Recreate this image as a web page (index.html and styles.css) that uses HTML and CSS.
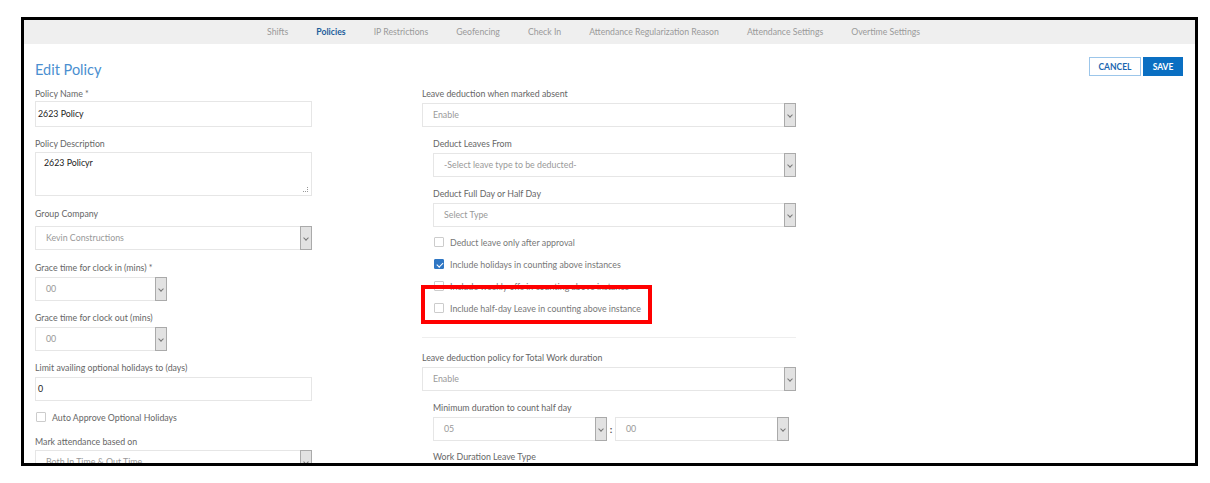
FILE: index.html
```html
<!DOCTYPE html>
<html lang="en">
<head>
    <meta charset="UTF-8">
    <meta name="viewport" content="width=device-width, initial-scale=1.0">
    <title>Edit Policy</title>
    <link rel="stylesheet" href="styles.css">
</head>
<body>
    <div class="frame">
        <nav class="tabs">
            <a href="#">Shifts</a>
            <a href="#" class="active">Policies</a>
            <a href="#">IP Restrictions</a>
            <a href="#">Geofencing</a>
            <a href="#">Check In</a>
            <a href="#">Attendance Regularization Reason</a>
            <a href="#">Attendance Settings</a>
            <a href="#">Overtime Settings</a>
        </nav>

        <div class="content">
            <div class="header">
                <h1>Edit Policy</h1>
                <div class="actions">
                    <button class="btnCancel">CANCEL</button>
                    <button class="btnSave">SAVE</button>
                </div>
            </div>

            <div class="columns">
                <div class="colLeft">
                    <div class="field">
                        <label>Policy Name *</label>
                        <div class="input inputTall">2623 Policy</div>
                    </div>
                    <div class="field wide">
                        <label>Policy Description</label>
                        <div class="textarea">2623 Policyr<span class="grip"></span></div>
                    </div>
                    <div class="field wide">
                        <label>Group Company</label>
                        <div class="select selectLow"><span>Kevin Constructions</span><i class="arrow"></i></div>
                    </div>
                    <div class="field">
                        <label>Grace time for clock in (mins) *</label>
                        <div class="select small"><span>00</span><i class="arrow"></i></div>
                    </div>
                    <div class="field">
                        <label>Grace time for clock out (mins)</label>
                        <div class="select small"><span>00</span><i class="arrow"></i></div>
                    </div>
                    <div class="field">
                        <label>Limit availing optional holidays to (days)</label>
                        <div class="input">0</div>
                    </div>
                    <div class="check checkLeft"><i class="box"></i>Auto Approve Optional Holidays</div>
                    <div class="field">
                        <label>Mark attendance based on</label>
                        <div class="select selectHigh"><span>Both In Time &amp; Out Time</span><i class="arrow"></i></div>
                    </div>
                </div>

                <div class="colMid">
                    <div class="field">
                        <label>Leave deduction when marked absent</label>
                        <div class="select"><span>Enable</span><i class="arrow"></i></div>
                    </div>
                    <div class="sub">
                        <div class="field">
                            <label>Deduct Leaves From</label>
                            <div class="select"><span>-Select leave type to be deducted-</span><i class="arrow"></i></div>
                        </div>
                        <div class="field">
                            <label>Deduct Full Day or Half Day</label>
                            <div class="select"><span>Select Type</span><i class="arrow"></i></div>
                        </div>
                        <div class="checklist">
                            <div class="check"><i class="box"></i>Deduct leave only after approval</div>
                            <div class="check"><i class="box checked"></i>Include holidays in counting above instances</div>
                            <div class="check"><i class="box"></i>Include weekly offs in counting above instance</div>
                            <div class="check"><i class="box"></i>Include half-day Leave in counting above instance</div>
                            <div class="highlight"></div>
                        </div>
                    </div>

                    <hr class="divider">

                    <div class="field">
                        <label>Leave deduction policy for Total Work duration</label>
                        <div class="select"><span>Enable</span><i class="arrow"></i></div>
                    </div>
                    <div class="sub">
                        <div class="field tight">
                            <label>Minimum duration to count half day</label>
                            <div class="timeRow">
                                <div class="select"><span>05</span><i class="arrow"></i></div>
                                <b class="colon">:</b>
                                <div class="select"><span>00</span><i class="arrow"></i></div>
                            </div>
                        </div>
                        <div class="field">
                            <label>Work Duration Leave Type</label>
                        </div>
                    </div>
                </div>
            </div>
        </div>
    </div>
</body>
</html>
```

FILE: styles.css
```css
body {
    font-family: Lato, "Open Sans", sans-serif;
    background-color: #fff;
    margin: 0;
    padding: 0;
}

.frame {
    margin: 17px 0 0 21px;
    width: 1177px;
    height: 449px;
    border: 3px solid #000;
    box-sizing: border-box;
    overflow: hidden;
}

/* top tabs */
.tabs {
    display: flex;
    align-items: center;
    gap: 28px;
    height: 24px;
    padding-left: 243px;
    background-color: #efefef;
}

.tabs a {
    font-size: 8.7px;
    color: #9a9a9a;
    text-decoration: none;
    margin-top: -1px;
}

.tabs a.active {
    color: #1d5e9b;
    font-weight: bold;
}

.content {
    padding: 13px 12px 0 11px;
}

.header {
    display: flex;
    justify-content: space-between;
    align-items: flex-start;
}

h1 {
    margin: 4px 0 0 0;
    font-size: 14.5px;
    line-height: 18px;
    font-weight: normal;
    color: #4a8fd0;
}

.actions {
    display: flex;
    gap: 2px;
}

.actions button {
    height: 19px;
    font-family: inherit;
    font-size: 8.5px;
    font-weight: bold;
    padding: 0;
    cursor: pointer;
}

.btnCancel {
    width: 52px;
    background-color: #fff;
    color: #1a66b0;
    border: 1px solid #9cc6ea;
}

.btnSave {
    width: 40px;
    background-color: #0a6fc2;
    color: #fff;
    border: 1px solid #0a6fc2;
}

.columns {
    display: flex;
    gap: 110px;
    margin-top: 7px;
}

.colLeft {
    width: 277px;
}

.colMid {
    width: 374px;
}

.sub {
    padding-left: 11px;
}

/* form fields */
.field {
    margin-bottom: 9px;
}

.field.wide {
    margin-bottom: 10px;
}

.field.tight {
    margin-bottom: 8px;
}

.field label {
    display: block;
    font-size: 8.8px;
    line-height: 16px;
    color: #666;
    margin: 0;
}

.input, .select, .textarea {
    box-sizing: border-box;
    border: 1px solid #e6e6e6;
    background-color: #fff;
    font-size: 8.8px;
}

.input {
    height: 24px;
    line-height: 22px;
    padding-left: 2px;
    color: #222;
    margin-top: 1px;
}

.inputTall {
    height: 26px;
    line-height: 24px;
    margin-top: -1px;
}

.textarea {
    position: relative;
    height: 44px;
    margin-top: 0;
    padding: 3px 8px;
    line-height: 14px;
    color: #222;
}

.grip {
    position: absolute;
    right: 3px;
    bottom: 3px;
    width: 4px;
    height: 4px;
    border-right: 1px dotted #999;
    border-bottom: 1px dotted #999;
}

.select {
    display: flex;
    height: 24px;
    line-height: 22px;
    color: #999;
    margin-top: 1px;
}

.select span {
    flex: 1;
    padding-left: 10px;
    white-space: nowrap;
    overflow: hidden;
}

.selectLow {
    margin-top: 4px;
}

.selectHigh {
    margin-top: 0;
}

.select.small {
    width: 132px;
}

.arrow {
    position: relative;
    width: 10px;
    margin: -1px -1px -1px 0;
    background-color: #e2e2e2;
    border: 1px solid #aaa;
}

.arrow::after {
    content: "";
    position: absolute;
    left: 3px;
    top: 9px;
    width: 3px;
    height: 3px;
    border-right: 1px solid #777;
    border-bottom: 1px solid #777;
    transform: rotate(45deg);
}

/* checkboxes */
.check {
    display: flex;
    align-items: center;
    height: 22px;
    font-size: 8.8px;
    color: #777;
}

.checkLeft {
    height: 14px;
    margin-bottom: 10px;
    color: #666;
}

.box {
    width: 10px;
    height: 10px;
    box-sizing: border-box;
    border: 1px solid #ccc;
    border-radius: 1px;
    margin: 0 6px 0 1px;
    position: relative;
}

.box.checked {
    background-color: #2f77c4;
    border-color: #2f77c4;
}

.box.checked::after {
    content: "";
    position: absolute;
    left: 2.5px;
    top: 0.5px;
    width: 2.5px;
    height: 5px;
    border-right: 1.5px solid #fff;
    border-bottom: 1.5px solid #fff;
    transform: rotate(45deg);
}

.checklist {
    position: relative;
    margin-top: -5px;
}

/* annotation box drawn over the form */
.highlight {
    position: absolute;
    left: -12px;
    top: 54px;
    width: 231px;
    height: 39px;
    box-sizing: border-box;
    border: 4px solid #f00;
}

.divider {
    border: none;
    border-top: 1px solid #eee;
    margin: 18px 0 12px 0;
}

.timeRow {
    display: flex;
    align-items: center;
    margin-top: 1px;
}

.timeRow .select {
    width: 174px;
    margin-top: 0;
}

.colon {
    width: 8px;
    text-align: center;
    font-size: 10px;
    color: #555;
}
```
